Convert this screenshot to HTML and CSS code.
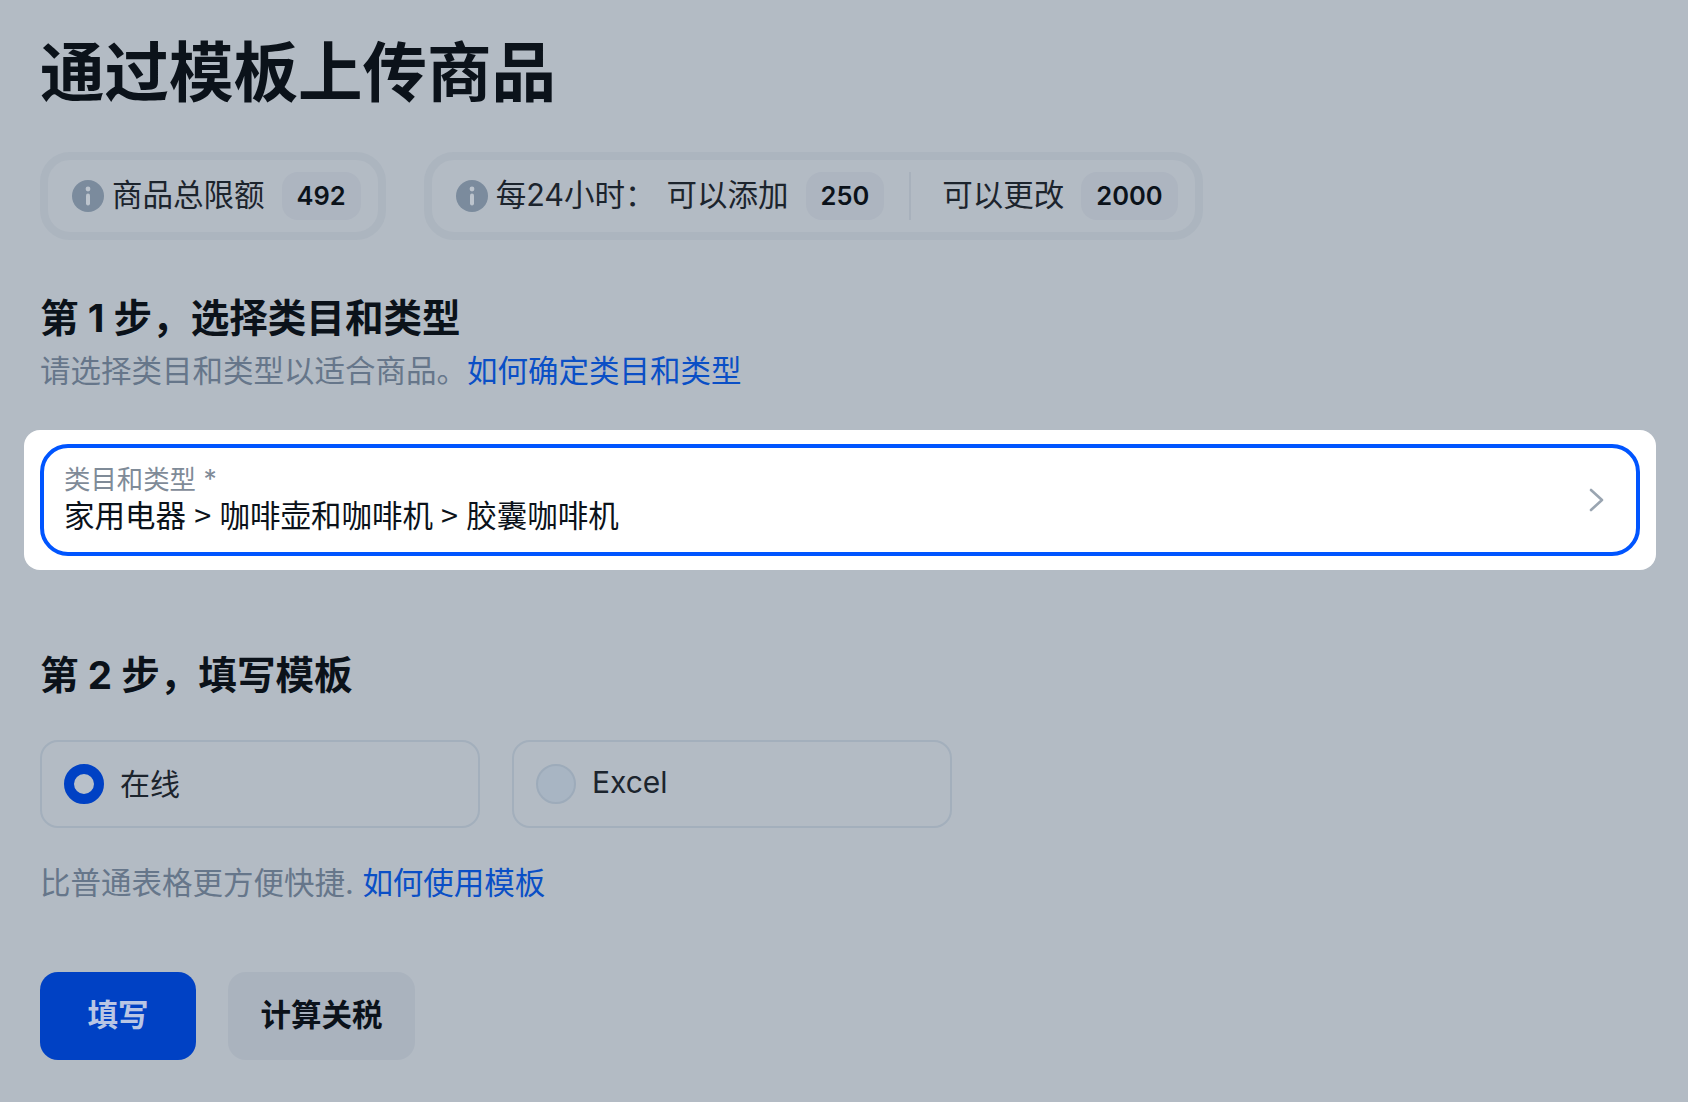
FILE: index.html
```html
<!DOCTYPE html>
<html lang="zh-CN">
<head>
    <meta charset="UTF-8">
    <title>通过模板上传商品</title>
    <link rel="stylesheet" href="styles.css">
</head>
<body>
    <h1 class="page-title">通过模板上传商品</h1>

    <div class="limits">
        <div class="limit-box">
            <svg class="info-icon" viewBox="0 0 32 32"><circle cx="16" cy="16" r="16" fill="#7b8b9d"/><circle cx="16" cy="9" r="2.4" fill="#bcc4cd"/><rect x="14" y="13.5" width="4" height="12" rx="2" fill="#bcc4cd"/></svg>
            <span class="limit-text">商品总限额</span>
            <span class="count">492</span>
        </div>
        <div class="limit-box">
            <svg class="info-icon" viewBox="0 0 32 32"><circle cx="16" cy="16" r="16" fill="#7b8b9d"/><circle cx="16" cy="9" r="2.4" fill="#bcc4cd"/><rect x="14" y="13.5" width="4" height="12" rx="2" fill="#bcc4cd"/></svg>
            <span class="limit-text">每24小时：</span>
            <span class="limit-text limit-add">可以添加</span>
            <span class="count">250</span>
            <span class="limit-divider"></span>
            <span class="limit-text">可以更改</span>
            <span class="count">2000</span>
        </div>
    </div>

    <h2 class="step-title step-one">第 1 步，选择类目和类型</h2>
    <p class="hint hint-one">请选择类目和类型以适合商品。<a href="#">如何确定类目和类型</a></p>

    <div class="field-card">
        <div class="field">
            <div class="field-body">
                <div class="field-label">类目和类型 *</div>
                <div class="field-value">家用电器 &gt; 咖啡壶和咖啡机 &gt; 胶囊咖啡机</div>
            </div>
            <svg class="chevron" viewBox="0 0 15 24"><path d="M2 2 L13 12 L2 22" fill="none" stroke="#9aa5b1" stroke-width="2.6" stroke-linecap="round" stroke-linejoin="round"/></svg>
        </div>
    </div>

    <h2 class="step-title step-two">第 2 步，填写模板</h2>

    <div class="options">
        <div class="option">
            <span class="radio radio-on"></span>
            <span class="option-text">在线</span>
        </div>
        <div class="option">
            <span class="radio"></span>
            <span class="option-text">Excel</span>
        </div>
    </div>

    <p class="hint hint-two">比普通表格更方便快捷. <a href="#">如何使用模板</a></p>

    <div class="buttons">
        <button class="btn btn-primary">填写</button>
        <button class="btn btn-secondary">计算关税</button>
    </div>
</body>
</html>
```

FILE: styles.css
```css
body {
    margin: 0;
    padding: 33px 48px 42px 40px;
    background-color: #b3bbc4;
    color: #0b121a;
    font-family: Inter, "Noto Sans CJK SC", sans-serif;
    font-size: 30.5px;
    overflow: hidden;
}
.page-title {
    margin: 0;
    font-size: 64.5px;
    line-height: 80px;
    font-weight: 700;
}
.limits {
    display: flex;
    gap: 38px;
    margin-top: 39px;
}
.limit-box {
    display: flex;
    align-items: center;
    height: 88px;
    box-sizing: border-box;
    padding: 0 17px 0 24px;
    border: 8px solid #acb5bf;
    border-radius: 30px;
}
.info-icon {
    width: 32px;
    height: 32px;
    flex-shrink: 0;
    margin-right: 8px;
}
.limit-text {
    line-height: 40px;
    margin-bottom: 2px;
    color: #1c242d;
}
.limit-add {
    margin-left: 11px;
}
.count {
    margin-left: 17px;
    padding: 0 15px;
    height: 48px;
    line-height: 48px;
    border-radius: 16px;
    background-color: #adb5c0;
    font-size: 25.5px;
    font-weight: 600;
}
.limit-divider {
    width: 2px;
    height: 48px;
    margin: 0 31px 0 25px;
    background-color: #a8b1bc;
}
.step-title {
    margin: 0;
    font-size: 38.6px;
    line-height: 48px;
    font-weight: 700;
}
.step-one {
    margin-top: 54px;
}
.step-two {
    margin-top: 81px;
}
.hint {
    margin: 0;
    line-height: 40px;
    color: #66768a;
}
.hint a {
    color: #0a4fc6;
    text-decoration: none;
}
.hint-one {
    margin-top: 9px;
}
.hint-two {
    margin-top: 35px;
}
.field-card {
    margin: 39px -16px 0;
    padding: 14px 16px;
    background-color: #fff;
    border-radius: 16px;
}
.field {
    display: flex;
    align-items: center;
    justify-content: space-between;
    height: 112px;
    box-sizing: border-box;
    padding: 0 32px 0 20px;
    border: 4px solid #0055ff;
    border-radius: 28px;
}
.field-body {
    padding-bottom: 2px;
}
.field-label {
    font-size: 26.4px;
    line-height: 30px;
    color: #7f8b98;
}
.field-value {
    line-height: 40px;
    font-family: "Noto Sans CJK SC", sans-serif;
    word-spacing: 1.4px;
    color: #0b121a;
}
.chevron {
    width: 15px;
    height: 24px;
}
.options {
    display: flex;
    gap: 32px;
    margin-top: 41px;
}
.option {
    display: flex;
    align-items: center;
    gap: 16px;
    width: 440px;
    height: 88px;
    box-sizing: border-box;
    padding: 0 22px;
    border: 2px solid #a3afbc;
    border-radius: 18px;
    color: #1c242d;
}
.option-text {
    margin-bottom: 4px;
    font-size: 30px;
}
.radio {
    width: 40px;
    height: 40px;
    box-sizing: border-box;
    border: 2px solid #9dabba;
    border-radius: 50%;
    background-color: #a8b5c3;
}
.radio-on {
    border: 10px solid #0041c4;
    background-color: #b8c0c9;
}
.buttons {
    display: flex;
    gap: 32px;
    margin-top: 69px;
}
.btn {
    height: 88px;
    padding: 0 0 6px;
    border: none;
    border-radius: 18px;
    font-family: inherit;
    font-size: 30.5px;
    font-weight: 700;
}
.btn-primary {
    width: 156px;
    background-color: #0041c4;
    color: #b9c6e4;
}
.btn-secondary {
    width: 187px;
    background-color: #aab3be;
    color: #0b121a;
}
```
